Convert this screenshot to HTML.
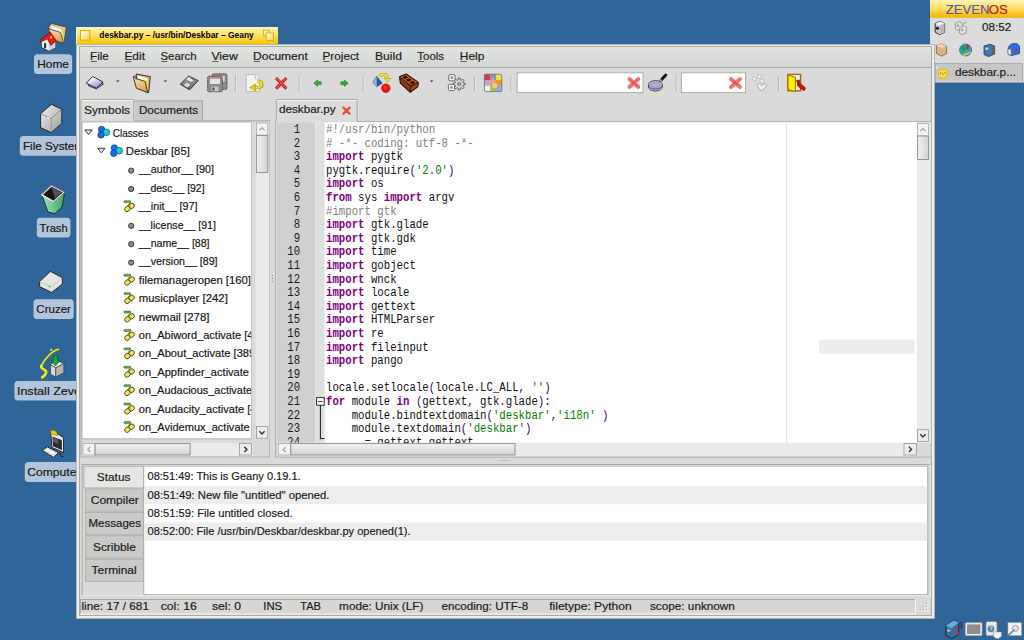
<!DOCTYPE html>
<html><head><meta charset="utf-8"><title>Geany</title>
<style>html,body{margin:0;padding:0;width:1024px;height:640px;overflow:hidden;background:#2f6598;}
svg{display:block;font-family:"Liberation Sans", sans-serif;}
text{white-space:pre;}</style></head>
<body><svg width="1024" height="640" viewBox="0 0 1024 640" font-family="'Liberation Sans', sans-serif"><defs><linearGradient id="gThumbV" x1="0" y1="0" x2="1" y2="0"><stop offset="0" stop-color="#f0f2f0"/><stop offset="1" stop-color="#d2d4d2"/></linearGradient><linearGradient id="gThumbH" x1="0" y1="0" x2="0" y2="1"><stop offset="0" stop-color="#f0f2f0"/><stop offset="1" stop-color="#d2d4d2"/></linearGradient><linearGradient id="gTitle" x1="0" y1="0" x2="0" y2="1">
<stop offset="0" stop-color="#fff4b0"/><stop offset="0.45" stop-color="#ffe26a"/><stop offset="1" stop-color="#f6c400"/></linearGradient><linearGradient id="gMenu" x1="0" y1="0" x2="0" y2="1">
<stop offset="0" stop-color="#e2e4e1"/><stop offset="1" stop-color="#d2d5d1"/></linearGradient><linearGradient id="gPaper" x1="0" y1="0" x2="0.6" y2="1"><stop offset="0" stop-color="#ffffff"/><stop offset="0.35" stop-color="#f2f2fa"/><stop offset="1" stop-color="#9090d8"/></linearGradient><linearGradient id="gFolder" x1="0" y1="0" x2="0.4" y2="1"><stop offset="0" stop-color="#fbe6bd"/><stop offset="1" stop-color="#e0a652"/></linearGradient><linearGradient id="gFloppy" x1="0" y1="0" x2="0" y2="1"><stop offset="0" stop-color="#a8a8a8"/><stop offset="1" stop-color="#606060"/></linearGradient><radialGradient id="gBall" cx="0.4" cy="0.35" r="0.7"><stop offset="0" stop-color="#ff8080"/><stop offset="0.5" stop-color="#ee1010"/><stop offset="1" stop-color="#a00000"/></radialGradient><linearGradient id="gLens" x1="0" y1="0" x2="0" y2="1"><stop offset="0" stop-color="#e8e8ff"/><stop offset="1" stop-color="#8888cc"/></linearGradient><linearGradient id="gSq" x1="0" y1="0" x2="1" y2="1"><stop offset="0" stop-color="#ffffff"/><stop offset="1" stop-color="#f8d040"/></linearGradient><linearGradient id="gCube" x1="0" y1="0" x2="1" y2="1"><stop offset="0" stop-color="#f4f4f4"/><stop offset="1" stop-color="#9a9a9a"/></linearGradient><linearGradient id="gTrash" x1="0" y1="0" x2="1" y2="0"><stop offset="0" stop-color="#9ee6b4"/><stop offset="1" stop-color="#3aa868"/></linearGradient><linearGradient id="gPanelHdr" x1="0" y1="0" x2="0" y2="1"><stop offset="0" stop-color="#fff4b8"/><stop offset="0.5" stop-color="#ffdc60"/><stop offset="1" stop-color="#f3b400"/></linearGradient></defs><rect x="0" y="0" width="1024" height="640" fill="#2f6598"/>
<rect x="34" y="54.2" width="38.099999999999994" height="19.89999999999999" fill="#b3c5da" rx="3.5" />
<text x="37.20" y="68.30" font-size="11.6" fill="#141414" textLength="31.76" lengthAdjust="spacingAndGlyphs" stroke="#141414" stroke-width="0.18" >Home</text>
<rect x="19.8" y="136" width="70.2" height="19.69999999999999" fill="#b3c5da" rx="3.5" />
<text x="22.90" y="149.80" font-size="11.6" fill="#141414" textLength="61.16" lengthAdjust="spacingAndGlyphs" stroke="#141414" stroke-width="0.18" >File System</text>
<rect x="36.8" y="217.7" width="33.60000000000001" height="19.900000000000006" fill="#b3c5da" rx="3.5" />
<text x="39.50" y="231.60" font-size="11.6" fill="#141414" textLength="28.16" lengthAdjust="spacingAndGlyphs" stroke="#141414" stroke-width="0.18" >Trash</text>
<rect x="33.5" y="299.3" width="40.2" height="19.69999999999999" fill="#b3c5da" rx="3.5" />
<text x="36.30" y="313.20" font-size="11.6" fill="#141414" textLength="34.66" lengthAdjust="spacingAndGlyphs" stroke="#141414" stroke-width="0.18" >Cruzer</text>
<rect x="14.4" y="381" width="75.6" height="19.600000000000023" fill="#b3c5da" rx="3.5" />
<text x="16.90" y="394.60" font-size="11.6" fill="#141414" textLength="71.16" lengthAdjust="spacingAndGlyphs" stroke="#141414" stroke-width="0.18" >Install Zeven</text>
<rect x="24.8" y="462" width="65.2" height="20" fill="#b3c5da" rx="3.5" />
<text x="27.30" y="476.00" font-size="11.6" fill="#141414" textLength="53.16" lengthAdjust="spacingAndGlyphs" stroke="#141414" stroke-width="0.18" >Computer</text>
<rect x="930" y="0" width="94" height="82.6" fill="#dcdcdc"/>
<rect x="930" y="0" width="94" height="17.6" fill="url(#gPanelHdr)"/>
<rect x="930" y="17.2" width="94" height="0.6" fill="#e8c020"/>
<text x="945.84" y="13.70" font-size="12.6" fill="#5656a8" textLength="43.66" lengthAdjust="spacingAndGlyphs" stroke="#5656a8" stroke-width="0.18" >ZEVEN</text>
<text x="988.84" y="13.70" font-size="12.6" fill="#cc1010" textLength="19.06" lengthAdjust="spacingAndGlyphs" stroke="#cc1010" stroke-width="0.18" >OS</text>
<text x="982.12" y="31.30" font-size="11.4" fill="#1a1a1a" textLength="29.24" lengthAdjust="spacingAndGlyphs" stroke="#1a1a1a" stroke-width="0.18" >08:52</text>
<path d="M935.2,23.4 L940.4,21.4 L944.6,23.6 L944.6,32.4 L939.6,34.6 L935.2,32.2 Z" fill="#dcdcdc" stroke="#1a1a1a" stroke-width="0.9" stroke-linejoin="round"/>
<path d="M935.2,23.4 L939.6,25.4 L944.6,23.6 L940.4,21.4 Z" fill="#f4f4f4"/>
<path d="M939.6,25.4 L944.6,23.6 L944.6,32.4 L939.6,34.6 Z" fill="#b8b8b8"/>
<circle cx="937.4" cy="28.2" r="1.8" fill="#2a2a2a"/><circle cx="937.6" cy="31.8" r="0.6" fill="#e02020"/>
<path d="M955.4,23.4 L959.6,21.6 L962.2,23.0 L962.0,28.6 L957.8,30.4 L955.4,29.0 Z" fill="#e4e4e4" stroke="#8a8a8a" stroke-width="0.8" stroke-linejoin="round"/>
<path d="M959.6,27.6 L963.8,25.8 L966.4,27.2 L966.2,32.8 L962.0,34.6 L959.6,33.2 Z" fill="#e4e4e4" stroke="#8a8a8a" stroke-width="0.8" stroke-linejoin="round"/>
<rect x="956.6" y="24.4" width="2.6" height="2.6" fill="#a8a8a8"/><rect x="960.8" y="28.6" width="2.6" height="2.6" fill="#a8a8a8"/>
<path d="M962.6,24.4 L966.8,22.0" stroke="#8a8a8a" stroke-width="0.8"/>
<path d="M936.4,45.6 L941.2,43.8 L946.6,46.2 L946.6,53.6 L941.6,56.2 L936.4,53.4 Z" fill="#e0b080" stroke="#6a5040" stroke-width="0.7"/>
<path d="M936.4,45.6 L941.6,48.0 L946.6,46.2 L941.2,43.8 Z" fill="#f8d4a8"/>
<circle cx="965.6" cy="50.0" r="6.0" fill="#28a8d0" stroke="#205080" stroke-width="0.7"/>
<path d="M961.0,48.0 L964.0,45.0 L966.0,49.0 L963.0,52.0 Z" fill="#20a030"/><path d="M966.0,45.0 L969.0,45.6 L968.4,50.0 L966.6,49.4 Z" fill="#e02020"/>
<path d="M960.4,55.4 C964,54 968,52 971.6,51.4 C970,54.4 965,56.6 960.4,55.4 Z" fill="#f0c020"/>
<path d="M984.0,46.0 L990.0,44.2 L994.6,46.0 L994.6,54.0 L988.6,56.6 L984.0,54.6 Z" fill="#3a78b0" stroke="#1a2a40" stroke-width="0.7"/>
<rect x="985.2" y="47.6" width="3.2" height="2.2" fill="#c0d0e0"/><circle cx="992.6" cy="49.0" r="1.0" fill="#e02020"/><circle cx="993.0" cy="52.4" r="1.0" fill="#e02020"/>
<path d="M1008.2,49.0 C1008.2,45 1012,43.4 1014.6,43.4 C1017.6,43.4 1019.6,45 1019.6,48 L1019.6,53.4 L1011.6,55.6 L1008.2,54.4 Z" fill="#2a70d8" stroke="#1a3060" stroke-width="0.7"/>
<path d="M1007.8,49.6 L1010.8,48.8 L1011.4,54.4 L1008.4,54.8 Z" fill="#f0f0f0" stroke="#606060" stroke-width="0.5"/><circle cx="1016.4" cy="49.6" r="0.9" fill="#e02020"/>
<rect x="935.2" y="63.4" width="87.4" height="18.6" fill="#c6c6c6" stroke="#a4a4a4" stroke-width="0.8"/>
<rect x="935.8" y="80.6" width="86.2" height="1" fill="#d8d8d8"/>
<text x="954.90" y="75.50" font-size="11.6" fill="#1a1a1a" textLength="61.16" lengthAdjust="spacingAndGlyphs" stroke="#1a1a1a" stroke-width="0.18" >deskbar.p...</text>
<path d="M938.2,72.4 C938.2,68.4 947.4,68.4 947.4,72.4 C947.4,76.4 945.4,78.2 942.8,78.2 C940.2,78.2 938.2,76.4 938.2,72.4 Z" fill="#f4e040" stroke="#c8a800" stroke-width="0.6"/>
<path d="M947.0,70.2 C950.4,70.2 950.4,75.6 946.4,76.0" fill="none" stroke="#e8c820" stroke-width="1.0"/><rect x="939.4" y="78.0" width="7" height="1.2" fill="#e0c820"/>
<circle cx="940.6" cy="73.0" r="0.7" fill="#e04020"/><circle cx="942.8" cy="74.0" r="0.7" fill="#e04020"/><circle cx="945.0" cy="73.0" r="0.7" fill="#e04020"/>
<rect x="936.6" y="66.0" width="0.8" height="2.6" fill="#f4f4f4"/>
<rect x="76" y="27" width="202" height="17" fill="url(#gTitle)" />
<rect x="76" y="27" width="202" height="1" fill="#f4f0d8" />
<rect x="76" y="27" width="1" height="17" fill="#f4f0d8" />
<rect x="76" y="44" width="859" height="575" fill="#eeeeec" />
<rect x="76.4" y="44.4" width="858.2" height="574.2" fill="none" stroke="#a4a4a0" stroke-width="0.8" />
<rect x="79" y="46" width="853" height="570" fill="#dadada" />
<rect x="79" y="46" width="853" height="1" fill="#a9a9a5" />
<rect x="79" y="46" width="1" height="570" fill="#a9a9a5" />
<rect x="931" y="46" width="1" height="570" fill="#a9a9a5" />
<rect x="79" y="615" width="853" height="1" fill="#a9a9a5" />
<rect x="80" y="47" width="851" height="20.5" fill="url(#gMenu)" />
<rect x="80" y="67" width="851" height="1" fill="#a8aaa6" />
<text x="90.01" y="59.80" font-size="11.5" fill="#1a1a1a" textLength="18.85" lengthAdjust="spacingAndGlyphs" stroke="#1a1a1a" stroke-width="0.18" >File</text>
<rect x="90.7" y="61.0" width="6.2" height="0.7" fill="#2a2a2a" />
<text x="124.41" y="59.80" font-size="11.5" fill="#1a1a1a" textLength="20.55" lengthAdjust="spacingAndGlyphs" stroke="#1a1a1a" stroke-width="0.18" >Edit</text>
<rect x="125.1" y="61.0" width="6.2" height="0.7" fill="#2a2a2a" />
<text x="160.51" y="59.80" font-size="11.5" fill="#1a1a1a" textLength="35.95" lengthAdjust="spacingAndGlyphs" stroke="#1a1a1a" stroke-width="0.18" >Search</text>
<rect x="161.2" y="61.0" width="6.2" height="0.7" fill="#2a2a2a" />
<text x="211.41" y="59.80" font-size="11.5" fill="#1a1a1a" textLength="26.35" lengthAdjust="spacingAndGlyphs" stroke="#1a1a1a" stroke-width="0.18" >View</text>
<rect x="212.1" y="61.0" width="6.2" height="0.7" fill="#2a2a2a" />
<text x="253.01" y="59.80" font-size="11.5" fill="#1a1a1a" textLength="54.85" lengthAdjust="spacingAndGlyphs" stroke="#1a1a1a" stroke-width="0.18" >Document</text>
<rect x="253.7" y="61.0" width="6.2" height="0.7" fill="#2a2a2a" />
<text x="322.51" y="59.80" font-size="11.5" fill="#1a1a1a" textLength="36.55" lengthAdjust="spacingAndGlyphs" stroke="#1a1a1a" stroke-width="0.18" >Project</text>
<rect x="323.2" y="61.0" width="6.2" height="0.7" fill="#2a2a2a" />
<text x="375.01" y="59.80" font-size="11.5" fill="#1a1a1a" textLength="26.85" lengthAdjust="spacingAndGlyphs" stroke="#1a1a1a" stroke-width="0.18" >Build</text>
<rect x="375.7" y="61.0" width="6.2" height="0.7" fill="#2a2a2a" />
<text x="417.31" y="59.80" font-size="11.5" fill="#1a1a1a" textLength="26.75" lengthAdjust="spacingAndGlyphs" stroke="#1a1a1a" stroke-width="0.18" >Tools</text>
<rect x="418.0" y="61.0" width="6.2" height="0.7" fill="#2a2a2a" />
<text x="459.81" y="59.80" font-size="11.5" fill="#1a1a1a" textLength="24.55" lengthAdjust="spacingAndGlyphs" stroke="#1a1a1a" stroke-width="0.18" >Help</text>
<rect x="460.5" y="61.0" width="6.2" height="0.7" fill="#2a2a2a" />
<rect x="80" y="68.8" width="851" height="29" fill="#dadada" />
<rect x="80" y="599" width="836" height="15" fill="#d6d6d4" />
<rect x="80" y="599" width="836" height="1" fill="#a8a8a4" />
<rect x="80" y="599" width="1" height="15" fill="#a8a8a4" />
<rect x="80" y="613.5" width="836" height="1" fill="#f4f4f2" />
<rect x="915" y="599" width="1" height="15" fill="#f4f4f2" />
<text x="81.51" y="610.30" font-size="11.5" fill="#1a1a1a" textLength="67.45" lengthAdjust="spacingAndGlyphs" stroke="#1a1a1a" stroke-width="0.18" >line: 17 / 681</text>
<text x="160.71" y="610.30" font-size="11.5" fill="#1a1a1a" textLength="36.05" lengthAdjust="spacingAndGlyphs" stroke="#1a1a1a" stroke-width="0.18" >col: 16</text>
<text x="212.01" y="610.30" font-size="11.5" fill="#1a1a1a" textLength="29.15" lengthAdjust="spacingAndGlyphs" stroke="#1a1a1a" stroke-width="0.18" >sel: 0</text>
<text x="263.31" y="610.30" font-size="11.5" fill="#1a1a1a" textLength="18.85" lengthAdjust="spacingAndGlyphs" stroke="#1a1a1a" stroke-width="0.18" >INS</text>
<text x="300.21" y="610.30" font-size="11.5" fill="#1a1a1a" textLength="20.65" lengthAdjust="spacingAndGlyphs" stroke="#1a1a1a" stroke-width="0.18" >TAB</text>
<text x="339.11" y="610.30" font-size="11.5" fill="#1a1a1a" textLength="84.25" lengthAdjust="spacingAndGlyphs" stroke="#1a1a1a" stroke-width="0.18" >mode: Unix (LF)</text>
<text x="441.51" y="610.30" font-size="11.5" fill="#1a1a1a" textLength="86.65" lengthAdjust="spacingAndGlyphs" stroke="#1a1a1a" stroke-width="0.18" >encoding: UTF-8</text>
<text x="549.21" y="610.30" font-size="11.5" fill="#1a1a1a" textLength="82.45" lengthAdjust="spacingAndGlyphs" stroke="#1a1a1a" stroke-width="0.18" >filetype: Python</text>
<text x="650.01" y="610.30" font-size="11.5" fill="#1a1a1a" textLength="84.85" lengthAdjust="spacingAndGlyphs" stroke="#1a1a1a" stroke-width="0.18" >scope: unknown</text>
<rect x="134" y="100.4" width="68.6" height="19.6" fill="#c9c9c7" />
<rect x="134" y="100.4" width="68.6" height="1" fill="#a8a8a4" />
<rect x="202" y="100.4" width="1" height="19.6" fill="#a8a8a4" />
<rect x="134" y="101.4" width="1" height="18.6" fill="#e0e0de" />
<text x="138.91" y="114.30" font-size="11.5" fill="#1a1a1a" textLength="59.15" lengthAdjust="spacingAndGlyphs" stroke="#1a1a1a" stroke-width="0.18" >Documents</text>
<rect x="80.4" y="99" width="53.4" height="22" fill="#dcdcda" />
<rect x="81" y="99" width="52.2" height="1" fill="#a8a8a4" />
<rect x="80.4" y="99.8" width="1" height="21" fill="#a8a8a4" />
<rect x="133.2" y="99.8" width="1" height="21" fill="#a8a8a4" />
<rect x="81.4" y="100" width="51.8" height="1" fill="#f2f2f0" />
<text x="84.11" y="113.80" font-size="11.5" fill="#1a1a1a" textLength="45.95" lengthAdjust="spacingAndGlyphs" stroke="#1a1a1a" stroke-width="0.18" >Symbols</text>
<rect x="80.5" y="120.3" width="189.5" height="337" fill="#dadada" />
<rect x="134" y="120.3" width="136" height="1" fill="#a8a8a4" />
<rect x="80.5" y="120.3" width="1" height="337" fill="#a8a8a4" />
<rect x="269.2" y="120.3" width="0.8" height="337" fill="#b0b0ac" />
<rect x="80.5" y="456.5" width="189.5" height="1" fill="#b0b0ac" />
<rect x="81.6" y="121.6" width="170" height="317.6" fill="#a6a6a2" />
<rect x="82.4" y="122.4" width="168.8" height="316" fill="#ffffff" />
<rect x="255.6" y="122.4" width="13.6" height="316.4" fill="#e9ebea" />
<rect x="256.4" y="123.0" width="11.4" height="12.2" fill="#f2f4f2" stroke="#9c9c9c" stroke-width="0.7" />
<rect x="256.4" y="135.4" width="11.4" height="37.0" fill="url(#gThumbV)" stroke="#8a8a8a" stroke-width="0.9" />
<rect x="256.4" y="426.6" width="11.4" height="11.6" fill="#eceeec" stroke="#8a8a8a" stroke-width="0.7" />
<rect x="82.4" y="443.0" width="170.2" height="13.0" fill="#e9ebea" />
<rect x="83.0" y="443.6" width="12.0" height="11.4" fill="#f2f4f2" stroke="#9c9c9c" stroke-width="0.7" />
<rect x="95.1" y="443.6" width="95.0" height="11.4" fill="url(#gThumbH)" stroke="#8a8a8a" stroke-width="0.9" />
<rect x="239.6" y="443.6" width="12.0" height="11.4" fill="#eceeec" stroke="#8a8a8a" stroke-width="0.7" />
<rect x="275.8" y="99" width="81.5" height="22.4" fill="#dcdcda" />
<rect x="276.4" y="99" width="80.4" height="1" fill="#a8a8a4" />
<rect x="275.8" y="99.8" width="1" height="21.6" fill="#a8a8a4" />
<rect x="356.6" y="99.8" width="1" height="21.6" fill="#a8a8a4" />
<rect x="276.6" y="100" width="80" height="1" fill="#f2f2f0" />
<text x="278.91" y="113.30" font-size="11.5" fill="#1a1a1a" textLength="56.85" lengthAdjust="spacingAndGlyphs" stroke="#1a1a1a" stroke-width="0.18" >deskbar.py</text>
<rect x="275.2" y="121.2" width="656.4" height="336" fill="#dadada" />
<rect x="357" y="121.2" width="574.6" height="1" fill="#a8a8a4" />
<rect x="275.2" y="121.2" width="1" height="336" fill="#a8a8a4" />
<rect x="930.8" y="121.2" width="0.8" height="336" fill="#b0b0ac" />
<rect x="275.2" y="456.6" width="656.4" height="1" fill="#b0b0ac" />
<rect x="276.4" y="122.2" width="640.8" height="320.6" fill="#ffffff" />
<rect x="276.4" y="122.2" width="38.8" height="320.6" fill="#d0d0d0" />
<rect x="315.2" y="122.2" width="9.4" height="320.6" fill="#dfdfdf" />
<rect x="786.2" y="122.2" width="0.9" height="320.6" fill="#c8ecc8" />
<rect x="819.3" y="339.6" width="95.4" height="14" fill="#ececec" />
<rect x="916.8" y="122.2" width="14.0" height="320.6" fill="#e9ebea" />
<rect x="917.6" y="123.4" width="11.0" height="12.6" fill="#f2f4f2" stroke="#9c9c9c" stroke-width="0.7" />
<rect x="917.6" y="136.0" width="11.0" height="23.5" fill="url(#gThumbV)" stroke="#8a8a8a" stroke-width="0.9" />
<rect x="917.6" y="429.7" width="11.0" height="11.6" fill="#eceeec" stroke="#8a8a8a" stroke-width="0.7" />
<rect x="277.0" y="442.8" width="640.0" height="13.4" fill="#e9ebea" />
<rect x="278.2" y="443.6" width="12.2" height="11.4" fill="#f2f4f2" stroke="#9c9c9c" stroke-width="0.7" />
<rect x="290.8" y="443.6" width="224.2" height="11.4" fill="url(#gThumbH)" stroke="#8a8a8a" stroke-width="0.9" />
<rect x="904.0" y="443.6" width="12.4" height="11.4" fill="#eceeec" stroke="#8a8a8a" stroke-width="0.7" />
<rect x="81.7" y="464" width="849.3" height="132" fill="#dadada" />
<rect x="81.7" y="464" width="849.3" height="1" fill="#a8a8a4" />
<rect x="81.7" y="464" width="1" height="132" fill="#a8a8a4" />
<rect x="81.7" y="595.4" width="849.3" height="0.8" fill="#f0f0ee" />
<rect x="930.2" y="464" width="0.8" height="132" fill="#f0f0ee" />
<rect x="143.4" y="466" width="785" height="129" fill="#a8a8a4" />
<rect x="144.2" y="466.6" width="783.0" height="127.6" fill="#ffffff" />
<rect x="144.2" y="486.2" width="783.0" height="17.9" fill="#ededed" />
<rect x="144.2" y="522.5" width="783.0" height="18.2" fill="#ededed" />
<rect x="85.5" y="489" width="57.8" height="22.19999999999999" fill="#c9c9c7" stroke="#a8a8a4" stroke-width="0.8" />
<rect x="85.5" y="512.4" width="57.8" height="22.399999999999977" fill="#c9c9c7" stroke="#a8a8a4" stroke-width="0.8" />
<rect x="85.5" y="535.8" width="57.8" height="22.40000000000009" fill="#c9c9c7" stroke="#a8a8a4" stroke-width="0.8" />
<rect x="85.5" y="559.2" width="57.8" height="22.09999999999991" fill="#c9c9c7" stroke="#a8a8a4" stroke-width="0.8" />
<rect x="84" y="466.3" width="59.6" height="21.6" fill="#e6e6e4" stroke="#a8a8a4" stroke-width="0.8" />
<text x="96.81" y="480.50" font-size="11.5" fill="#1a1a1a" textLength="33.65" lengthAdjust="spacingAndGlyphs" stroke="#1a1a1a" stroke-width="0.18" >Status</text>
<text x="90.71" y="503.60" font-size="11.5" fill="#1a1a1a" textLength="48.15" lengthAdjust="spacingAndGlyphs" stroke="#1a1a1a" stroke-width="0.18" >Compiler</text>
<text x="88.51" y="527.00" font-size="11.5" fill="#1a1a1a" textLength="52.55" lengthAdjust="spacingAndGlyphs" stroke="#1a1a1a" stroke-width="0.18" >Messages</text>
<text x="93.01" y="550.60" font-size="11.5" fill="#1a1a1a" textLength="42.85" lengthAdjust="spacingAndGlyphs" stroke="#1a1a1a" stroke-width="0.18" >Scribble</text>
<text x="91.61" y="573.80" font-size="11.5" fill="#1a1a1a" textLength="44.95" lengthAdjust="spacingAndGlyphs" stroke="#1a1a1a" stroke-width="0.18" >Terminal</text>
<text x="147.53" y="480.40" font-size="11.2" fill="#1a1a1a" textLength="153.11" lengthAdjust="spacingAndGlyphs" stroke="#1a1a1a" stroke-width="0.18" >08:51:49: This is Geany 0.19.1.</text>
<text x="147.53" y="498.70" font-size="11.2" fill="#1a1a1a" textLength="181.98" lengthAdjust="spacingAndGlyphs" stroke="#1a1a1a" stroke-width="0.18" >08:51:49: New file &quot;untitled&quot; opened.</text>
<text x="147.53" y="517.00" font-size="11.2" fill="#1a1a1a" textLength="145.08" lengthAdjust="spacingAndGlyphs" stroke="#1a1a1a" stroke-width="0.18" >08:51:59: File untitled closed.</text>
<text x="147.53" y="535.30" font-size="11.2" fill="#1a1a1a" textLength="263.03" lengthAdjust="spacingAndGlyphs" stroke="#1a1a1a" stroke-width="0.18" >08:52:00: File /usr/bin/Deskbar/deskbar.py opened(1).</text>
<defs><clipPath id="cTree"><rect x="82.4" y="122.4" width="168.8" height="316"/></clipPath></defs>
<g clip-path="url(#cTree)">
<text x="112.85" y="136.50" font-size="10.9" fill="#161616" textLength="35.59" lengthAdjust="spacingAndGlyphs" stroke="#161616" stroke-width="0.18" >Classes</text>
<text x="125.85" y="154.90" font-size="10.9" fill="#161616" textLength="63.96" lengthAdjust="spacingAndGlyphs" stroke="#161616" stroke-width="0.18" >Deskbar [85]</text>
<text x="138.85" y="173.30" font-size="10.9" fill="#161616" textLength="75.16" lengthAdjust="spacingAndGlyphs" stroke="#161616" stroke-width="0.18" >__author__ [90]</text>
<text x="138.85" y="191.70" font-size="10.9" fill="#161616" textLength="65.75" lengthAdjust="spacingAndGlyphs" stroke="#161616" stroke-width="0.18" >__desc__ [92]</text>
<text x="138.85" y="210.10" font-size="10.9" fill="#161616" textLength="58.62" lengthAdjust="spacingAndGlyphs" stroke="#161616" stroke-width="0.18" >__init__ [97]</text>
<text x="138.85" y="228.50" font-size="10.9" fill="#161616" textLength="77.05" lengthAdjust="spacingAndGlyphs" stroke="#161616" stroke-width="0.18" >__license__ [91]</text>
<text x="138.85" y="246.90" font-size="10.9" fill="#161616" textLength="70.73" lengthAdjust="spacingAndGlyphs" stroke="#161616" stroke-width="0.18" >__name__ [88]</text>
<text x="138.85" y="265.30" font-size="10.9" fill="#161616" textLength="78.70" lengthAdjust="spacingAndGlyphs" stroke="#161616" stroke-width="0.18" >__version__ [89]</text>
<text x="138.85" y="283.70" font-size="10.9" fill="#161616" textLength="112.05" lengthAdjust="spacingAndGlyphs" stroke="#161616" stroke-width="0.18" >filemanageropen [160]</text>
<text x="138.85" y="302.10" font-size="10.9" fill="#161616" textLength="88.97" lengthAdjust="spacingAndGlyphs" stroke="#161616" stroke-width="0.18" >musicplayer [242]</text>
<text x="138.85" y="320.50" font-size="10.9" fill="#161616" textLength="70.72" lengthAdjust="spacingAndGlyphs" stroke="#161616" stroke-width="0.18" >newmail [278]</text>
<text x="138.85" y="338.90" font-size="10.9" fill="#161616" textLength="129.94" lengthAdjust="spacingAndGlyphs" stroke="#161616" stroke-width="0.18" >on_Abiword_activate [431]</text>
<text x="138.85" y="357.30" font-size="10.9" fill="#161616" textLength="119.33" lengthAdjust="spacingAndGlyphs" stroke="#161616" stroke-width="0.18" >on_About_activate [389]</text>
<text x="138.85" y="375.70" font-size="10.9" fill="#161616" textLength="137.88" lengthAdjust="spacingAndGlyphs" stroke="#161616" stroke-width="0.18" >on_Appfinder_activate [402]</text>
<text x="138.85" y="394.10" font-size="10.9" fill="#161616" textLength="140.60" lengthAdjust="spacingAndGlyphs" stroke="#161616" stroke-width="0.18" >on_Audacious_activate [410]</text>
<text x="138.85" y="412.50" font-size="10.9" fill="#161616" textLength="133.04" lengthAdjust="spacingAndGlyphs" stroke="#161616" stroke-width="0.18" >on_Audacity_activate [418]</text>
<text x="138.85" y="430.90" font-size="10.9" fill="#161616" textLength="138.53" lengthAdjust="spacingAndGlyphs" stroke="#161616" stroke-width="0.18" >on_Avidemux_activate [426]</text>
<!--TREEICONS-->
</g>
<defs><clipPath id="cCode"><rect x="276.4" y="122.2" width="640.8" height="320.6"/></clipPath></defs>
<g clip-path="url(#cCode)">
<text x="300.2" y="133.00" font-size="12" font-family="'Liberation Mono', monospace" fill="#1a1a1a" text-anchor="end" textLength="6.42" lengthAdjust="spacingAndGlyphs">1</text>
<text x="326.00" y="133.00" font-size="12" font-family="'Liberation Mono', monospace" font-weight="normal" fill="#808080" textLength="109.14" lengthAdjust="spacingAndGlyphs">#!/usr/bin/python</text>
<text x="300.2" y="146.60" font-size="12" font-family="'Liberation Mono', monospace" fill="#1a1a1a" text-anchor="end" textLength="6.42" lengthAdjust="spacingAndGlyphs">2</text>
<text x="326.00" y="146.60" font-size="12" font-family="'Liberation Mono', monospace" font-weight="normal" fill="#808080" textLength="147.66" lengthAdjust="spacingAndGlyphs"># -*- coding: utf-8 -*-</text>
<text x="300.2" y="160.20" font-size="12" font-family="'Liberation Mono', monospace" fill="#1a1a1a" text-anchor="end" textLength="6.42" lengthAdjust="spacingAndGlyphs">3</text>
<text x="326.00" y="160.20" font-size="12" font-family="'Liberation Mono', monospace" font-weight="bold" fill="#7f007f" textLength="38.52" lengthAdjust="spacingAndGlyphs">import</text>
<text x="364.52" y="160.20" font-size="12" font-family="'Liberation Mono', monospace" font-weight="normal" fill="#101010" textLength="38.52" lengthAdjust="spacingAndGlyphs"> pygtk</text>
<text x="300.2" y="173.80" font-size="12" font-family="'Liberation Mono', monospace" fill="#1a1a1a" text-anchor="end" textLength="6.42" lengthAdjust="spacingAndGlyphs">4</text>
<text x="326.00" y="173.80" font-size="12" font-family="'Liberation Mono', monospace" font-weight="normal" fill="#101010" textLength="32.10" lengthAdjust="spacingAndGlyphs">pygtk</text>
<text x="358.10" y="173.80" font-size="12" font-family="'Liberation Mono', monospace" font-weight="normal" fill="#300080" textLength="6.42" lengthAdjust="spacingAndGlyphs">.</text>
<text x="364.52" y="173.80" font-size="12" font-family="'Liberation Mono', monospace" font-weight="normal" fill="#101010" textLength="44.94" lengthAdjust="spacingAndGlyphs">require</text>
<text x="409.46" y="173.80" font-size="12" font-family="'Liberation Mono', monospace" font-weight="normal" fill="#300080" textLength="6.42" lengthAdjust="spacingAndGlyphs">(</text>
<text x="415.88" y="173.80" font-size="12" font-family="'Liberation Mono', monospace" font-weight="normal" fill="#008000" textLength="32.10" lengthAdjust="spacingAndGlyphs">&#x27;2.0&#x27;</text>
<text x="447.98" y="173.80" font-size="12" font-family="'Liberation Mono', monospace" font-weight="normal" fill="#300080" textLength="6.42" lengthAdjust="spacingAndGlyphs">)</text>
<text x="300.2" y="187.40" font-size="12" font-family="'Liberation Mono', monospace" fill="#1a1a1a" text-anchor="end" textLength="6.42" lengthAdjust="spacingAndGlyphs">5</text>
<text x="326.00" y="187.40" font-size="12" font-family="'Liberation Mono', monospace" font-weight="bold" fill="#7f007f" textLength="38.52" lengthAdjust="spacingAndGlyphs">import</text>
<text x="364.52" y="187.40" font-size="12" font-family="'Liberation Mono', monospace" font-weight="normal" fill="#101010" textLength="19.26" lengthAdjust="spacingAndGlyphs"> os</text>
<text x="300.2" y="201.00" font-size="12" font-family="'Liberation Mono', monospace" fill="#1a1a1a" text-anchor="end" textLength="6.42" lengthAdjust="spacingAndGlyphs">6</text>
<text x="326.00" y="201.00" font-size="12" font-family="'Liberation Mono', monospace" font-weight="bold" fill="#7f007f" textLength="25.68" lengthAdjust="spacingAndGlyphs">from</text>
<text x="351.68" y="201.00" font-size="12" font-family="'Liberation Mono', monospace" font-weight="normal" fill="#101010" textLength="32.10" lengthAdjust="spacingAndGlyphs"> sys </text>
<text x="383.78" y="201.00" font-size="12" font-family="'Liberation Mono', monospace" font-weight="bold" fill="#7f007f" textLength="38.52" lengthAdjust="spacingAndGlyphs">import</text>
<text x="422.30" y="201.00" font-size="12" font-family="'Liberation Mono', monospace" font-weight="normal" fill="#101010" textLength="32.10" lengthAdjust="spacingAndGlyphs"> argv</text>
<text x="300.2" y="214.60" font-size="12" font-family="'Liberation Mono', monospace" fill="#1a1a1a" text-anchor="end" textLength="6.42" lengthAdjust="spacingAndGlyphs">7</text>
<text x="326.00" y="214.60" font-size="12" font-family="'Liberation Mono', monospace" font-weight="normal" fill="#808080" textLength="70.62" lengthAdjust="spacingAndGlyphs">#import gtk</text>
<text x="300.2" y="228.20" font-size="12" font-family="'Liberation Mono', monospace" fill="#1a1a1a" text-anchor="end" textLength="6.42" lengthAdjust="spacingAndGlyphs">8</text>
<text x="326.00" y="228.20" font-size="12" font-family="'Liberation Mono', monospace" font-weight="bold" fill="#7f007f" textLength="38.52" lengthAdjust="spacingAndGlyphs">import</text>
<text x="364.52" y="228.20" font-size="12" font-family="'Liberation Mono', monospace" font-weight="normal" fill="#101010" textLength="25.68" lengthAdjust="spacingAndGlyphs"> gtk</text>
<text x="390.20" y="228.20" font-size="12" font-family="'Liberation Mono', monospace" font-weight="normal" fill="#300080" textLength="6.42" lengthAdjust="spacingAndGlyphs">.</text>
<text x="396.62" y="228.20" font-size="12" font-family="'Liberation Mono', monospace" font-weight="normal" fill="#101010" textLength="32.10" lengthAdjust="spacingAndGlyphs">glade</text>
<text x="300.2" y="241.80" font-size="12" font-family="'Liberation Mono', monospace" fill="#1a1a1a" text-anchor="end" textLength="6.42" lengthAdjust="spacingAndGlyphs">9</text>
<text x="326.00" y="241.80" font-size="12" font-family="'Liberation Mono', monospace" font-weight="bold" fill="#7f007f" textLength="38.52" lengthAdjust="spacingAndGlyphs">import</text>
<text x="364.52" y="241.80" font-size="12" font-family="'Liberation Mono', monospace" font-weight="normal" fill="#101010" textLength="25.68" lengthAdjust="spacingAndGlyphs"> gtk</text>
<text x="390.20" y="241.80" font-size="12" font-family="'Liberation Mono', monospace" font-weight="normal" fill="#300080" textLength="6.42" lengthAdjust="spacingAndGlyphs">.</text>
<text x="396.62" y="241.80" font-size="12" font-family="'Liberation Mono', monospace" font-weight="normal" fill="#101010" textLength="19.26" lengthAdjust="spacingAndGlyphs">gdk</text>
<text x="300.2" y="255.40" font-size="12" font-family="'Liberation Mono', monospace" fill="#1a1a1a" text-anchor="end" textLength="12.84" lengthAdjust="spacingAndGlyphs">10</text>
<text x="326.00" y="255.40" font-size="12" font-family="'Liberation Mono', monospace" font-weight="bold" fill="#7f007f" textLength="38.52" lengthAdjust="spacingAndGlyphs">import</text>
<text x="364.52" y="255.40" font-size="12" font-family="'Liberation Mono', monospace" font-weight="normal" fill="#101010" textLength="32.10" lengthAdjust="spacingAndGlyphs"> time</text>
<text x="300.2" y="269.00" font-size="12" font-family="'Liberation Mono', monospace" fill="#1a1a1a" text-anchor="end" textLength="12.84" lengthAdjust="spacingAndGlyphs">11</text>
<text x="326.00" y="269.00" font-size="12" font-family="'Liberation Mono', monospace" font-weight="bold" fill="#7f007f" textLength="38.52" lengthAdjust="spacingAndGlyphs">import</text>
<text x="364.52" y="269.00" font-size="12" font-family="'Liberation Mono', monospace" font-weight="normal" fill="#101010" textLength="51.36" lengthAdjust="spacingAndGlyphs"> gobject</text>
<text x="300.2" y="282.60" font-size="12" font-family="'Liberation Mono', monospace" fill="#1a1a1a" text-anchor="end" textLength="12.84" lengthAdjust="spacingAndGlyphs">12</text>
<text x="326.00" y="282.60" font-size="12" font-family="'Liberation Mono', monospace" font-weight="bold" fill="#7f007f" textLength="38.52" lengthAdjust="spacingAndGlyphs">import</text>
<text x="364.52" y="282.60" font-size="12" font-family="'Liberation Mono', monospace" font-weight="normal" fill="#101010" textLength="32.10" lengthAdjust="spacingAndGlyphs"> wnck</text>
<text x="300.2" y="296.20" font-size="12" font-family="'Liberation Mono', monospace" fill="#1a1a1a" text-anchor="end" textLength="12.84" lengthAdjust="spacingAndGlyphs">13</text>
<text x="326.00" y="296.20" font-size="12" font-family="'Liberation Mono', monospace" font-weight="bold" fill="#7f007f" textLength="38.52" lengthAdjust="spacingAndGlyphs">import</text>
<text x="364.52" y="296.20" font-size="12" font-family="'Liberation Mono', monospace" font-weight="normal" fill="#101010" textLength="44.94" lengthAdjust="spacingAndGlyphs"> locale</text>
<text x="300.2" y="309.80" font-size="12" font-family="'Liberation Mono', monospace" fill="#1a1a1a" text-anchor="end" textLength="12.84" lengthAdjust="spacingAndGlyphs">14</text>
<text x="326.00" y="309.80" font-size="12" font-family="'Liberation Mono', monospace" font-weight="bold" fill="#7f007f" textLength="38.52" lengthAdjust="spacingAndGlyphs">import</text>
<text x="364.52" y="309.80" font-size="12" font-family="'Liberation Mono', monospace" font-weight="normal" fill="#101010" textLength="51.36" lengthAdjust="spacingAndGlyphs"> gettext</text>
<text x="300.2" y="323.40" font-size="12" font-family="'Liberation Mono', monospace" fill="#1a1a1a" text-anchor="end" textLength="12.84" lengthAdjust="spacingAndGlyphs">15</text>
<text x="326.00" y="323.40" font-size="12" font-family="'Liberation Mono', monospace" font-weight="bold" fill="#7f007f" textLength="38.52" lengthAdjust="spacingAndGlyphs">import</text>
<text x="364.52" y="323.40" font-size="12" font-family="'Liberation Mono', monospace" font-weight="normal" fill="#101010" textLength="70.62" lengthAdjust="spacingAndGlyphs"> HTMLParser</text>
<text x="300.2" y="337.00" font-size="12" font-family="'Liberation Mono', monospace" fill="#1a1a1a" text-anchor="end" textLength="12.84" lengthAdjust="spacingAndGlyphs">16</text>
<text x="326.00" y="337.00" font-size="12" font-family="'Liberation Mono', monospace" font-weight="bold" fill="#7f007f" textLength="38.52" lengthAdjust="spacingAndGlyphs">import</text>
<text x="364.52" y="337.00" font-size="12" font-family="'Liberation Mono', monospace" font-weight="normal" fill="#101010" textLength="19.26" lengthAdjust="spacingAndGlyphs"> re</text>
<text x="300.2" y="350.60" font-size="12" font-family="'Liberation Mono', monospace" fill="#1a1a1a" text-anchor="end" textLength="12.84" lengthAdjust="spacingAndGlyphs">17</text>
<text x="326.00" y="350.60" font-size="12" font-family="'Liberation Mono', monospace" font-weight="bold" fill="#7f007f" textLength="38.52" lengthAdjust="spacingAndGlyphs">import</text>
<text x="364.52" y="350.60" font-size="12" font-family="'Liberation Mono', monospace" font-weight="normal" fill="#101010" textLength="64.20" lengthAdjust="spacingAndGlyphs"> fileinput</text>
<text x="300.2" y="364.20" font-size="12" font-family="'Liberation Mono', monospace" fill="#1a1a1a" text-anchor="end" textLength="12.84" lengthAdjust="spacingAndGlyphs">18</text>
<text x="326.00" y="364.20" font-size="12" font-family="'Liberation Mono', monospace" font-weight="bold" fill="#7f007f" textLength="38.52" lengthAdjust="spacingAndGlyphs">import</text>
<text x="364.52" y="364.20" font-size="12" font-family="'Liberation Mono', monospace" font-weight="normal" fill="#101010" textLength="38.52" lengthAdjust="spacingAndGlyphs"> pango</text>
<text x="300.2" y="377.80" font-size="12" font-family="'Liberation Mono', monospace" fill="#1a1a1a" text-anchor="end" textLength="12.84" lengthAdjust="spacingAndGlyphs">19</text>
<text x="300.2" y="391.40" font-size="12" font-family="'Liberation Mono', monospace" fill="#1a1a1a" text-anchor="end" textLength="12.84" lengthAdjust="spacingAndGlyphs">20</text>
<text x="326.00" y="391.40" font-size="12" font-family="'Liberation Mono', monospace" font-weight="normal" fill="#101010" textLength="38.52" lengthAdjust="spacingAndGlyphs">locale</text>
<text x="364.52" y="391.40" font-size="12" font-family="'Liberation Mono', monospace" font-weight="normal" fill="#300080" textLength="6.42" lengthAdjust="spacingAndGlyphs">.</text>
<text x="370.94" y="391.40" font-size="12" font-family="'Liberation Mono', monospace" font-weight="normal" fill="#101010" textLength="57.78" lengthAdjust="spacingAndGlyphs">setlocale</text>
<text x="428.72" y="391.40" font-size="12" font-family="'Liberation Mono', monospace" font-weight="normal" fill="#300080" textLength="6.42" lengthAdjust="spacingAndGlyphs">(</text>
<text x="435.14" y="391.40" font-size="12" font-family="'Liberation Mono', monospace" font-weight="normal" fill="#101010" textLength="38.52" lengthAdjust="spacingAndGlyphs">locale</text>
<text x="473.66" y="391.40" font-size="12" font-family="'Liberation Mono', monospace" font-weight="normal" fill="#300080" textLength="6.42" lengthAdjust="spacingAndGlyphs">.</text>
<text x="480.08" y="391.40" font-size="12" font-family="'Liberation Mono', monospace" font-weight="normal" fill="#101010" textLength="38.52" lengthAdjust="spacingAndGlyphs">LC_ALL</text>
<text x="518.60" y="391.40" font-size="12" font-family="'Liberation Mono', monospace" font-weight="normal" fill="#300080" textLength="6.42" lengthAdjust="spacingAndGlyphs">,</text>
<text x="525.02" y="391.40" font-size="12" font-family="'Liberation Mono', monospace" font-weight="normal" fill="#101010" textLength="6.42" lengthAdjust="spacingAndGlyphs"> </text>
<text x="531.44" y="391.40" font-size="12" font-family="'Liberation Mono', monospace" font-weight="normal" fill="#008000" textLength="12.84" lengthAdjust="spacingAndGlyphs">&#x27;&#x27;</text>
<text x="544.28" y="391.40" font-size="12" font-family="'Liberation Mono', monospace" font-weight="normal" fill="#300080" textLength="6.42" lengthAdjust="spacingAndGlyphs">)</text>
<text x="300.2" y="405.00" font-size="12" font-family="'Liberation Mono', monospace" fill="#1a1a1a" text-anchor="end" textLength="12.84" lengthAdjust="spacingAndGlyphs">21</text>
<text x="326.00" y="405.00" font-size="12" font-family="'Liberation Mono', monospace" font-weight="bold" fill="#7f007f" textLength="19.26" lengthAdjust="spacingAndGlyphs">for</text>
<text x="345.26" y="405.00" font-size="12" font-family="'Liberation Mono', monospace" font-weight="normal" fill="#101010" textLength="51.36" lengthAdjust="spacingAndGlyphs"> module </text>
<text x="396.62" y="405.00" font-size="12" font-family="'Liberation Mono', monospace" font-weight="bold" fill="#7f007f" textLength="12.84" lengthAdjust="spacingAndGlyphs">in</text>
<text x="409.46" y="405.00" font-size="12" font-family="'Liberation Mono', monospace" font-weight="normal" fill="#101010" textLength="6.42" lengthAdjust="spacingAndGlyphs"> </text>
<text x="415.88" y="405.00" font-size="12" font-family="'Liberation Mono', monospace" font-weight="normal" fill="#300080" textLength="6.42" lengthAdjust="spacingAndGlyphs">(</text>
<text x="422.30" y="405.00" font-size="12" font-family="'Liberation Mono', monospace" font-weight="normal" fill="#101010" textLength="44.94" lengthAdjust="spacingAndGlyphs">gettext</text>
<text x="467.24" y="405.00" font-size="12" font-family="'Liberation Mono', monospace" font-weight="normal" fill="#300080" textLength="6.42" lengthAdjust="spacingAndGlyphs">,</text>
<text x="473.66" y="405.00" font-size="12" font-family="'Liberation Mono', monospace" font-weight="normal" fill="#101010" textLength="25.68" lengthAdjust="spacingAndGlyphs"> gtk</text>
<text x="499.34" y="405.00" font-size="12" font-family="'Liberation Mono', monospace" font-weight="normal" fill="#300080" textLength="6.42" lengthAdjust="spacingAndGlyphs">.</text>
<text x="505.76" y="405.00" font-size="12" font-family="'Liberation Mono', monospace" font-weight="normal" fill="#101010" textLength="32.10" lengthAdjust="spacingAndGlyphs">glade</text>
<text x="537.86" y="405.00" font-size="12" font-family="'Liberation Mono', monospace" font-weight="normal" fill="#300080" textLength="6.42" lengthAdjust="spacingAndGlyphs">)</text>
<text x="544.28" y="405.00" font-size="12" font-family="'Liberation Mono', monospace" font-weight="normal" fill="#300080" textLength="6.42" lengthAdjust="spacingAndGlyphs">:</text>
<text x="300.2" y="418.60" font-size="12" font-family="'Liberation Mono', monospace" fill="#1a1a1a" text-anchor="end" textLength="12.84" lengthAdjust="spacingAndGlyphs">22</text>
<text x="326.00" y="418.60" font-size="12" font-family="'Liberation Mono', monospace" font-weight="normal" fill="#101010" textLength="64.20" lengthAdjust="spacingAndGlyphs">    module</text>
<text x="390.20" y="418.60" font-size="12" font-family="'Liberation Mono', monospace" font-weight="normal" fill="#300080" textLength="6.42" lengthAdjust="spacingAndGlyphs">.</text>
<text x="396.62" y="418.60" font-size="12" font-family="'Liberation Mono', monospace" font-weight="normal" fill="#101010" textLength="89.88" lengthAdjust="spacingAndGlyphs">bindtextdomain</text>
<text x="486.50" y="418.60" font-size="12" font-family="'Liberation Mono', monospace" font-weight="normal" fill="#300080" textLength="6.42" lengthAdjust="spacingAndGlyphs">(</text>
<text x="492.92" y="418.60" font-size="12" font-family="'Liberation Mono', monospace" font-weight="normal" fill="#008000" textLength="57.78" lengthAdjust="spacingAndGlyphs">&#x27;deskbar&#x27;</text>
<text x="550.70" y="418.60" font-size="12" font-family="'Liberation Mono', monospace" font-weight="normal" fill="#300080" textLength="6.42" lengthAdjust="spacingAndGlyphs">,</text>
<text x="557.12" y="418.60" font-size="12" font-family="'Liberation Mono', monospace" font-weight="normal" fill="#008000" textLength="38.52" lengthAdjust="spacingAndGlyphs">&#x27;i18n&#x27;</text>
<text x="595.64" y="418.60" font-size="12" font-family="'Liberation Mono', monospace" font-weight="normal" fill="#101010" textLength="6.42" lengthAdjust="spacingAndGlyphs"> </text>
<text x="602.06" y="418.60" font-size="12" font-family="'Liberation Mono', monospace" font-weight="normal" fill="#300080" textLength="6.42" lengthAdjust="spacingAndGlyphs">)</text>
<text x="300.2" y="432.20" font-size="12" font-family="'Liberation Mono', monospace" fill="#1a1a1a" text-anchor="end" textLength="12.84" lengthAdjust="spacingAndGlyphs">23</text>
<text x="326.00" y="432.20" font-size="12" font-family="'Liberation Mono', monospace" font-weight="normal" fill="#101010" textLength="64.20" lengthAdjust="spacingAndGlyphs">    module</text>
<text x="390.20" y="432.20" font-size="12" font-family="'Liberation Mono', monospace" font-weight="normal" fill="#300080" textLength="6.42" lengthAdjust="spacingAndGlyphs">.</text>
<text x="396.62" y="432.20" font-size="12" font-family="'Liberation Mono', monospace" font-weight="normal" fill="#101010" textLength="64.20" lengthAdjust="spacingAndGlyphs">textdomain</text>
<text x="460.82" y="432.20" font-size="12" font-family="'Liberation Mono', monospace" font-weight="normal" fill="#300080" textLength="6.42" lengthAdjust="spacingAndGlyphs">(</text>
<text x="467.24" y="432.20" font-size="12" font-family="'Liberation Mono', monospace" font-weight="normal" fill="#008000" textLength="57.78" lengthAdjust="spacingAndGlyphs">&#x27;deskbar&#x27;</text>
<text x="525.02" y="432.20" font-size="12" font-family="'Liberation Mono', monospace" font-weight="normal" fill="#300080" textLength="6.42" lengthAdjust="spacingAndGlyphs">)</text>
<text x="300.2" y="445.80" font-size="12" font-family="'Liberation Mono', monospace" fill="#1a1a1a" text-anchor="end" textLength="12.84" lengthAdjust="spacingAndGlyphs">24</text>
<text x="326.00" y="445.80" font-size="12" font-family="'Liberation Mono', monospace" font-weight="normal" fill="#101010" textLength="38.52" lengthAdjust="spacingAndGlyphs">    _ </text>
<text x="364.52" y="445.80" font-size="12" font-family="'Liberation Mono', monospace" font-weight="normal" fill="#300080" textLength="6.42" lengthAdjust="spacingAndGlyphs">=</text>
<text x="370.94" y="445.80" font-size="12" font-family="'Liberation Mono', monospace" font-weight="normal" fill="#101010" textLength="51.36" lengthAdjust="spacingAndGlyphs"> gettext</text>
<text x="422.30" y="445.80" font-size="12" font-family="'Liberation Mono', monospace" font-weight="normal" fill="#300080" textLength="6.42" lengthAdjust="spacingAndGlyphs">.</text>
<text x="428.72" y="445.80" font-size="12" font-family="'Liberation Mono', monospace" font-weight="normal" fill="#101010" textLength="44.94" lengthAdjust="spacingAndGlyphs">gettext</text>
<rect x="316.6" y="397.6" width="7.6" height="7.6" fill="#ffffff" stroke="#1a1a1a" stroke-width="0.9"/>
<rect x="318.2" y="401" width="4.4" height="0.9" fill="#1a1a1a"/>
<rect x="319.9" y="405.2" width="1" height="34" fill="#1a1a1a"/>
<rect x="319.9" y="438" width="4.6" height="1" fill="#1a1a1a"/>
</g>
<text x="99.37" y="38.00" font-size="8.8" fill="#000000" font-weight="bold" textLength="154.38" lengthAdjust="spacingAndGlyphs" >deskbar.py – /usr/bin/Deskbar – Geany</text>
<rect x="80.5" y="30.5" width="9.4" height="9.6" fill="url(#gSq)" stroke="#d8a800" stroke-width="0.9"/>
<rect x="263.4" y="30.2" width="5.6" height="5.6" fill="url(#gSq)" stroke="#d8a800" stroke-width="0.8"/>
<rect x="266.2" y="33" width="7.4" height="7.4" fill="url(#gSq)" stroke="#d8a800" stroke-width="0.8"/>
<path d="M88,85.5 L96.2,89 L103.6,84 L95.6,80.4 Z" fill="#9a9ad8" stroke="#3a3a50" stroke-width="0.9" stroke-linejoin="round"/>
<path d="M86.2,83.2 L92.6,76.4 L103.0,82.0 L96.4,88.2 Z" fill="url(#gPaper)" stroke="#30303c" stroke-width="1" stroke-linejoin="round"/>
<path d="M116.0,80.4 L119.6,80.4 L117.8,82.2 Z" fill="#383838"/>
<path d="M136.1,74.0 L150.4,76.6 L148.6,92.6 L137.4,88.0 Z" fill="#e2aa5a" stroke="#2a2a20" stroke-width="0.9" stroke-linejoin="round"/>
<path d="M137.4,75.4 L147.6,78.2 L147.4,90.0 L138.6,86.6 Z" fill="#ffffff"/>
<path d="M145.4,80.0 L147.8,80.4 L147.6,90.8 L145.6,90.2 Z" fill="#e0ec3a"/>
<path d="M133.2,76.6 L134.8,76.0 L135.4,78.4 L145.2,81.4 L147.6,92.6 L136.4,88.2 Z" fill="url(#gFolder)" stroke="#2a2a20" stroke-width="0.9" stroke-linejoin="round"/>
<path d="M163.6,80.4 L167.20000000000002,80.4 L165.4,82.2 Z" fill="#383838"/>
<path d="M180.2,84.2 L188.6,76.0 L198.2,80.6 L189.6,89.8 Z" fill="url(#gFloppy)" stroke="#2a2a2a" stroke-width="0.9" stroke-linejoin="round"/>
<path d="M186.2,79.2 L189.4,76.8 L194.6,79.4 L191.4,82.0 Z" fill="#e8e8e8"/>
<path d="M189.6,77.4 L193.2,79.2" stroke="#c02020" stroke-width="0.8"/><path d="M191.6,78.6 L194.6,80.2" stroke="#3040c0" stroke-width="0.8"/>
<path d="M183.6,85.2 L186.6,82.4 L190.4,84.6 L187.6,87.6 Z" fill="#d8d8d8"/>
<rect x="212.2" y="73.8" width="14.8" height="15.6" rx="1.4" fill="#8c8c8c" stroke="#404040" stroke-width="0.9" stroke-dasharray="1.2,0.6"/>
<rect x="214.6" y="75.2" width="10" height="6.4" fill="#e4e4e4"/>
<rect x="214.6" y="75.2" width="10" height="1" fill="#c86060"/>
<rect x="216.2" y="84.2" width="6.8" height="4.6" fill="#c8c8c8"/><rect x="217.2" y="85.2" width="1.8" height="2.8" fill="#404040"/>
<rect x="207.6" y="76.2" width="14.8" height="15.6" rx="1.4" fill="#8c8c8c" stroke="#404040" stroke-width="0.9" stroke-dasharray="1.2,0.6"/>
<rect x="210.0" y="77.60000000000001" width="10" height="6.4" fill="#e4e4e4"/>
<rect x="210.0" y="77.60000000000001" width="10" height="1" fill="#c86060"/>
<rect x="211.6" y="86.60000000000001" width="6.8" height="4.6" fill="#c8c8c8"/><rect x="212.6" y="87.60000000000001" width="1.8" height="2.8" fill="#404040"/>
<rect x="234.9" y="74.6" width="1" height="17.200000000000003" fill="#b4b4b2"/><rect x="235.9" y="74.6" width="0.8" height="17.200000000000003" fill="#ececea"/>
<path d="M246.2,74.6 L255.4,74.6 L259.6,78.8 L259.6,91.4 L246.2,91.4 Z" fill="#f4f4f2" stroke="#b4b4b0" stroke-width="0.9"/>
<path d="M255.4,74.6 L255.4,78.8 L259.6,78.8" fill="#ffffff" stroke="#b4b4b0" stroke-width="0.8"/>
<path d="M257.6,81.4 C263.4,81.4 263.4,87.6 257.6,87.6 L254.4,87.6" fill="none" stroke="#c8a800" stroke-width="3.2"/>
<path d="M257.6,81.4 C262.4,81.4 262.4,87.6 257.6,87.6 L254.4,87.6" fill="none" stroke="#f8e040" stroke-width="1.6"/>
<path d="M255.6,84.0 L249.6,87.6 L255.6,91.0 Z" fill="#e8cc20" stroke="#b89800" stroke-width="0.7"/>
<path d="M276.0,78.0 L286.4,88.6 M286.4,78.0 L276.0,88.6" stroke="#b01810" stroke-width="3.0" stroke-linecap="butt"/>
<path d="M276.2,78.2 L286.2,88.4 M286.2,78.2 L276.2,88.4" stroke="#f04038" stroke-width="1.7" stroke-linecap="butt"/>
<rect x="298.7" y="74.6" width="1" height="17.200000000000003" fill="#b4b4b2"/><rect x="299.7" y="74.6" width="0.8" height="17.200000000000003" fill="#ececea"/>
<path d="M313.8,83.2 L317.6,80.0 L317.6,81.8 L321.2,81.8 L321.2,84.6 L317.6,84.6 L317.6,86.4 Z" fill="#30b030" stroke="#1a7a1a" stroke-width="0.6"/>
<path d="M348.2,83.2 L344.4,80.0 L344.4,81.8 L340.8,81.8 L340.8,84.6 L344.4,84.6 L344.4,86.4 Z" fill="#30b030" stroke="#1a7a1a" stroke-width="0.6"/>
<rect x="362.7" y="74.6" width="1" height="17.200000000000003" fill="#b4b4b2"/><rect x="363.7" y="74.6" width="0.8" height="17.200000000000003" fill="#ececea"/>
<path d="M372.8,82.2 L376.6,76.4 L382.2,83.2 L376.8,86.6 Z" fill="#2a58a0" stroke="#1a3a70" stroke-width="0.6" stroke-linejoin="round"/>
<path d="M376.6,76.4 L376.8,86.6 L372.8,82.2 Z" fill="#8cb8e8"/>
<path d="M379.0,77.0 C380.6,73.4 387.4,73.2 387.6,78.8" fill="none" stroke="#b89c00" stroke-width="3.0"/>
<path d="M379.0,77.0 C380.6,73.4 387.4,73.2 387.6,78.8" fill="none" stroke="#fbe454" stroke-width="1.6"/>
<path d="M384.0,78.4 L391.0,78.4 L387.6,82.6 Z" fill="#f4dc30" stroke="#b89c00" stroke-width="0.6" stroke-linejoin="round"/>
<circle cx="385.8" cy="88.2" r="4.2" fill="#e81010" stroke="#a01010" stroke-width="0.7"/>
<circle cx="385.4" cy="87.6" r="2.0" fill="#ff2a2a"/>
<path d="M399.4,76.6 L406.4,73.8 L418.6,82.4 L417.8,87.0 L410.2,92.6 L400.2,83.2 Z" fill="#1a0c04" stroke="#1a0c04" stroke-width="0.8" stroke-linejoin="round"/>
<path d="M400.2,77.0 L406.4,74.6 L417.6,82.4 L411.0,85.6 Z" fill="#c8561a"/>
<path d="M400.4,77.8 L410.6,86.4 L410.2,91.6 L400.8,82.8 Z" fill="#8e3a0e"/>
<path d="M411.4,86.4 L417.8,83.2 L417.2,86.6 L411.0,91.2 Z" fill="#a84812"/>
<path d="M403.0,77.4 L406.0,76.2 L407.4,77.4 L404.4,78.6 Z M406.6,80.0 L409.6,78.8 L411.0,80.0 L408.0,81.2 Z M410.2,82.6 L413.2,81.4 L414.6,82.6 L411.6,83.8 Z" fill="#1a0a00" stroke="#1a0a00" stroke-width="0.9"/>
<path d="M429.8,80.4 L433.40000000000003,80.4 L431.6,82.2 Z" fill="#383838"/>
<path d="M465.11,82.98 L465.11,85.02 L463.49,84.97 L462.92,86.35 L464.10,87.46 L462.66,88.90 L461.55,87.72 L460.17,88.29 L460.22,89.91 L458.18,89.91 L458.23,88.29 L456.85,87.72 L455.74,88.90 L454.30,87.46 L455.48,86.35 L454.91,84.97 L453.29,85.02 L453.29,82.98 L454.91,83.03 L455.48,81.65 L454.30,80.54 L455.74,79.10 L456.85,80.28 L458.23,79.71 L458.18,78.09 L460.22,78.09 L460.17,79.71 L461.55,80.28 L462.66,79.10 L464.10,80.54 L462.92,81.65 L463.49,83.03 Z" fill="#d4d4d4" stroke="#5a5a5a" stroke-width="0.9" stroke-linejoin="round"/>
<circle cx="459.2" cy="84.0" r="1.8" fill="#9a9a9a" stroke="#6a6a6a" stroke-width="0.5"/>
<rect x="448.8" y="74.6" width="6.2" height="6.2" rx="1.2" fill="#f4f4f4" stroke="#5a5a5a" stroke-width="0.9"/><rect x="450.8" y="76.6" width="2.2" height="2.2" fill="#7a7a7a"/>
<rect x="448.4" y="84.4" width="6.2" height="6.2" rx="1.2" fill="#f4f4f4" stroke="#5a5a5a" stroke-width="0.9"/><rect x="450.4" y="86.4" width="2.2" height="2.2" fill="#7a7a7a"/>
<rect x="473.9" y="74.6" width="1" height="17.200000000000003" fill="#b4b4b2"/><rect x="474.9" y="74.6" width="0.8" height="17.200000000000003" fill="#ececea"/>
<rect x="484.40" y="74.20" width="5.9" height="5.9" fill="#e03838"/>
<rect x="490.20" y="74.20" width="5.9" height="5.9" fill="#6e9ad8"/>
<rect x="496.00" y="74.20" width="5.9" height="5.9" fill="#f4de40"/>
<rect x="484.40" y="80.00" width="5.9" height="5.9" fill="#c8a0d0"/>
<rect x="490.20" y="80.00" width="5.9" height="5.9" fill="#e8b070"/>
<rect x="496.00" y="80.00" width="5.9" height="5.9" fill="#f09838"/>
<rect x="484.40" y="85.80" width="5.9" height="5.9" fill="#f0f0ea"/>
<rect x="490.20" y="85.80" width="5.9" height="5.9" fill="#78e048"/>
<rect x="496.00" y="85.80" width="5.9" height="5.9" fill="#88b4e8"/>
<rect x="484.4" y="74.2" width="17.4" height="17.4" rx="1.6" fill="none" stroke="#6a6a6a" stroke-width="0.8"/>
<path d="M491.6,86.4 L492.2,78.6 C492.6,77.2 493.8,77.2 494.0,78.6 L494.2,82.2 L497.4,82.8 C498.6,83.2 498.2,88.6 496.6,89.0 L492.4,89.0 Z" fill="#f0c890" stroke="#c07830" stroke-width="0.7"/>
<rect x="510.5" y="74.6" width="1" height="17.200000000000003" fill="#b4b4b2"/><rect x="511.5" y="74.6" width="0.8" height="17.200000000000003" fill="#ececea"/>
<rect x="517.2" y="72.8" width="125.8" height="19.8" fill="#ffffff" stroke="#b0b0a0" stroke-width="1"/>
<path d="M629.4,79.0 L638.4,87.0 M638.4,79.0 L629.4,87.0" stroke="#f0706a" stroke-width="3.8" stroke-linecap="round"/>
<path d="M632.0,82.0 L635.8,84.6" stroke="#e03a36" stroke-width="1.6" stroke-linecap="round" opacity="0.7"/>
<path d="M661.4,79.8 L665.8,75.0" stroke="#101010" stroke-width="3.0" stroke-linecap="round"/>
<path d="M659.0,81.6 L661.4,79.4" stroke="#9a9a9a" stroke-width="2.0"/>
<ellipse cx="655.4" cy="86.8" rx="7.0" ry="4.2" fill="#c4c4ee" stroke="#383838" stroke-width="0.9"/>
<ellipse cx="655.4" cy="84.8" rx="7.0" ry="4.2" fill="#d4d4d4" stroke="#383838" stroke-width="0.9"/>
<ellipse cx="655.4" cy="85.0" rx="5.4" ry="2.8" fill="#aaaae4" stroke="#7a7a7a" stroke-width="0.5"/>
<rect x="675.7" y="74.6" width="1" height="17.200000000000003" fill="#b4b4b2"/><rect x="676.7" y="74.6" width="0.8" height="17.200000000000003" fill="#ececea"/>
<rect x="681.4" y="72.8" width="64.2" height="19.8" fill="#ffffff" stroke="#b0b0a0" stroke-width="1"/>
<path d="M731.0,79.0 L740.0,87.0 M740.0,79.0 L731.0,87.0" stroke="#f0706a" stroke-width="3.8" stroke-linecap="round"/>
<path d="M733.6,82.0 L737.4,84.6" stroke="#e03a36" stroke-width="1.6" stroke-linecap="round" opacity="0.7"/>
<circle cx="754.6" cy="78.8" r="1.9" fill="#f4f4f4" stroke="#a8a8a8" stroke-width="0.6"/><circle cx="759.6" cy="76.4" r="1.9" fill="#f4f4f4" stroke="#a8a8a8" stroke-width="0.6"/><circle cx="762.0" cy="81.0" r="2.0" fill="#f4f4f4" stroke="#a8a8a8" stroke-width="0.6"/>
<path d="M757.2,84.4 C758.6,83.2 759.8,83.8 761.8,86.0 C763.8,83.8 765.0,83.2 766.4,84.4 C767.2,85.6 764.0,89.2 761.8,90.8 C759.6,89.2 756.4,85.6 757.2,84.4 Z" fill="#f2f2f2" stroke="#8e8e8e" stroke-width="0.7"/>
<rect x="777.9" y="74.6" width="1" height="17.200000000000003" fill="#b4b4b2"/><rect x="778.9" y="74.6" width="0.8" height="17.200000000000003" fill="#ececea"/>
<rect x="787.8" y="74.4" width="12.8" height="16.4" fill="#f0f0f0" stroke="#a86a00" stroke-width="1.4"/>
<path d="M788.0,75.0 L795.4,77.4 L795.4,91.4 L788.0,89.6 Z" fill="#fff000" stroke="#a07000" stroke-width="1"/>
<path d="M797.6,81.6 L805.6,88.0 L804.0,90.8 L797.8,86.0 Z" fill="#e01010" stroke="#800000" stroke-width="0.8"/>
<path d="M796.4,80.4 L800.0,80.2 L798.4,84.6 Z" fill="#e01010" stroke="#800000" stroke-width="0.6"/>
<path d="M343.4,107.6 L349.6,113.8 M349.6,107.6 L343.4,113.8" stroke="#e84838" stroke-width="2.2" stroke-linecap="round"/>
<path d="M259.4,130.3 L262,127.7 L264.6,130.3" fill="none" stroke="#a0a0a0" stroke-width="1.2"/>
<path d="M259.4,431.3 L262,433.90000000000003 L264.6,431.3" fill="none" stroke="#303030" stroke-width="1.4"/>
<path d="M90.3,446.79999999999995 L87.7,449.4 L90.3,452.0" fill="none" stroke="#a0a0a0" stroke-width="1.2"/>
<path d="M244.29999999999998,446.79999999999995 L246.9,449.4 L244.29999999999998,452.0" fill="none" stroke="#303030" stroke-width="1.4"/>
<path d="M920.3,131.10000000000002 L922.9,128.5 L925.5,131.10000000000002" fill="none" stroke="#a0a0a0" stroke-width="1.2"/>
<path d="M920.3,434.3 L922.9,436.90000000000003 L925.5,434.3" fill="none" stroke="#303030" stroke-width="1.4"/>
<path d="M285.7,446.79999999999995 L283.09999999999997,449.4 L285.7,452.0" fill="none" stroke="#a0a0a0" stroke-width="1.2"/>
<path d="M908.9000000000001,446.79999999999995 L911.5,449.4 L908.9000000000001,452.0" fill="none" stroke="#303030" stroke-width="1.4"/>
<rect x="272" y="275" width="1" height="1" fill="#909090"/>
<rect x="272" y="278" width="1" height="1" fill="#909090"/>
<rect x="272" y="281" width="1" height="1" fill="#909090"/>
<rect x="500.0" y="460" width="1" height="1" fill="#a0a0a0"/>
<rect x="502.2" y="460" width="1" height="1" fill="#a0a0a0"/>
<rect x="504.4" y="460" width="1" height="1" fill="#a0a0a0"/>
<rect x="506.6" y="460" width="1" height="1" fill="#a0a0a0"/>
<rect x="508.8" y="460" width="1" height="1" fill="#a0a0a0"/>
<rect x="927" y="604" width="1.4" height="1.4" fill="#f8f8f8"/><rect x="926.1" y="603.1" width="1" height="1" fill="#a8a8a8"/>
<rect x="924" y="607" width="1.4" height="1.4" fill="#f8f8f8"/><rect x="923.1" y="606.1" width="1" height="1" fill="#a8a8a8"/>
<rect x="927" y="607" width="1.4" height="1.4" fill="#f8f8f8"/><rect x="926.1" y="606.1" width="1" height="1" fill="#a8a8a8"/>
<rect x="921" y="610" width="1.4" height="1.4" fill="#f8f8f8"/><rect x="920.1" y="609.1" width="1" height="1" fill="#a8a8a8"/>
<rect x="924" y="610" width="1.4" height="1.4" fill="#f8f8f8"/><rect x="923.1" y="609.1" width="1" height="1" fill="#a8a8a8"/>
<rect x="927" y="610" width="1.4" height="1.4" fill="#f8f8f8"/><rect x="926.1" y="609.1" width="1" height="1" fill="#a8a8a8"/>
<g clip-path="url(#cTree)">
<path d="M84.8,129.9 L92.2,129.9 L88.5,134.5 Z" fill="#e4e4e4" stroke="#3a3a3a" stroke-width="1.0" stroke-linejoin="round"/>
<circle cx="101.60000000000001" cy="129.5" r="3.2" fill="#1a6ce8" stroke="#0a2a70" stroke-width="0.6"/>
<circle cx="106.4" cy="132.3" r="3.4" fill="#10d0d0" stroke="#0a5050" stroke-width="0.6"/>
<circle cx="101.0" cy="134.9" r="3.2" fill="#1a6ce8" stroke="#0a2a70" stroke-width="0.6"/>
<path d="M97.6,148.3 L105.0,148.3 L101.3,152.9 Z" fill="#e4e4e4" stroke="#3a3a3a" stroke-width="1.0" stroke-linejoin="round"/>
<circle cx="114.30000000000001" cy="147.9" r="3.2" fill="#1a6ce8" stroke="#0a2a70" stroke-width="0.6"/>
<circle cx="119.10000000000001" cy="150.70000000000002" r="3.4" fill="#10d0d0" stroke="#0a5050" stroke-width="0.6"/>
<circle cx="113.7" cy="153.3" r="3.2" fill="#1a6ce8" stroke="#0a2a70" stroke-width="0.6"/>
<circle cx="131.2" cy="170.60000000000002" r="2.6" fill="#8e8a9c" stroke="#2a2a34" stroke-width="0.9"/>
<circle cx="131.2" cy="189.0" r="2.6" fill="#8e8a9c" stroke="#2a2a34" stroke-width="0.9"/>
<rect x="123.8" y="200.7" width="7.0" height="1.9" rx="0.8" fill="#5ac030" stroke="#3a3a3a" stroke-width="0.5"/>
<path d="M130.4,202.7 C129.0,203.89999999999998 128.2,204.7 128.0,205.89999999999998" fill="none" stroke="#3a3a3a" stroke-width="0.8"/>
<ellipse cx="131.6" cy="205.89999999999998" rx="2.9" ry="2.5" transform="rotate(-40 131.6 205.89999999999998)" fill="#f2e44a" stroke="#3a3a20" stroke-width="0.8"/>
<ellipse cx="127.39999999999999" cy="208.89999999999998" rx="2.9" ry="2.5" transform="rotate(-40 127.39999999999999 208.89999999999998)" fill="#f2e44a" stroke="#3a3a20" stroke-width="0.8"/>
<circle cx="131.2" cy="225.8" r="2.6" fill="#8e8a9c" stroke="#2a2a34" stroke-width="0.9"/>
<circle cx="131.2" cy="244.2" r="2.6" fill="#8e8a9c" stroke="#2a2a34" stroke-width="0.9"/>
<circle cx="131.2" cy="262.59999999999997" r="2.6" fill="#8e8a9c" stroke="#2a2a34" stroke-width="0.9"/>
<rect x="123.8" y="274.29999999999995" width="7.0" height="1.9" rx="0.8" fill="#5ac030" stroke="#3a3a3a" stroke-width="0.5"/>
<path d="M130.4,276.29999999999995 C129.0,277.5 128.2,278.29999999999995 128.0,279.5" fill="none" stroke="#3a3a3a" stroke-width="0.8"/>
<ellipse cx="131.6" cy="279.5" rx="2.9" ry="2.5" transform="rotate(-40 131.6 279.5)" fill="#f2e44a" stroke="#3a3a20" stroke-width="0.8"/>
<ellipse cx="127.39999999999999" cy="282.5" rx="2.9" ry="2.5" transform="rotate(-40 127.39999999999999 282.5)" fill="#f2e44a" stroke="#3a3a20" stroke-width="0.8"/>
<rect x="123.8" y="292.7" width="7.0" height="1.9" rx="0.8" fill="#5ac030" stroke="#3a3a3a" stroke-width="0.5"/>
<path d="M130.4,294.7 C129.0,295.90000000000003 128.2,296.7 128.0,297.90000000000003" fill="none" stroke="#3a3a3a" stroke-width="0.8"/>
<ellipse cx="131.6" cy="297.90000000000003" rx="2.9" ry="2.5" transform="rotate(-40 131.6 297.90000000000003)" fill="#f2e44a" stroke="#3a3a20" stroke-width="0.8"/>
<ellipse cx="127.39999999999999" cy="300.90000000000003" rx="2.9" ry="2.5" transform="rotate(-40 127.39999999999999 300.90000000000003)" fill="#f2e44a" stroke="#3a3a20" stroke-width="0.8"/>
<rect x="123.8" y="311.09999999999997" width="7.0" height="1.9" rx="0.8" fill="#5ac030" stroke="#3a3a3a" stroke-width="0.5"/>
<path d="M130.4,313.09999999999997 C129.0,314.3 128.2,315.09999999999997 128.0,316.3" fill="none" stroke="#3a3a3a" stroke-width="0.8"/>
<ellipse cx="131.6" cy="316.3" rx="2.9" ry="2.5" transform="rotate(-40 131.6 316.3)" fill="#f2e44a" stroke="#3a3a20" stroke-width="0.8"/>
<ellipse cx="127.39999999999999" cy="319.3" rx="2.9" ry="2.5" transform="rotate(-40 127.39999999999999 319.3)" fill="#f2e44a" stroke="#3a3a20" stroke-width="0.8"/>
<rect x="123.8" y="329.49999999999994" width="7.0" height="1.9" rx="0.8" fill="#5ac030" stroke="#3a3a3a" stroke-width="0.5"/>
<path d="M130.4,331.49999999999994 C129.0,332.7 128.2,333.49999999999994 128.0,334.7" fill="none" stroke="#3a3a3a" stroke-width="0.8"/>
<ellipse cx="131.6" cy="334.7" rx="2.9" ry="2.5" transform="rotate(-40 131.6 334.7)" fill="#f2e44a" stroke="#3a3a20" stroke-width="0.8"/>
<ellipse cx="127.39999999999999" cy="337.7" rx="2.9" ry="2.5" transform="rotate(-40 127.39999999999999 337.7)" fill="#f2e44a" stroke="#3a3a20" stroke-width="0.8"/>
<rect x="123.8" y="347.8999999999999" width="7.0" height="1.9" rx="0.8" fill="#5ac030" stroke="#3a3a3a" stroke-width="0.5"/>
<path d="M130.4,349.8999999999999 C129.0,351.09999999999997 128.2,351.8999999999999 128.0,353.09999999999997" fill="none" stroke="#3a3a3a" stroke-width="0.8"/>
<ellipse cx="131.6" cy="353.09999999999997" rx="2.9" ry="2.5" transform="rotate(-40 131.6 353.09999999999997)" fill="#f2e44a" stroke="#3a3a20" stroke-width="0.8"/>
<ellipse cx="127.39999999999999" cy="356.09999999999997" rx="2.9" ry="2.5" transform="rotate(-40 127.39999999999999 356.09999999999997)" fill="#f2e44a" stroke="#3a3a20" stroke-width="0.8"/>
<rect x="123.8" y="366.29999999999995" width="7.0" height="1.9" rx="0.8" fill="#5ac030" stroke="#3a3a3a" stroke-width="0.5"/>
<path d="M130.4,368.29999999999995 C129.0,369.5 128.2,370.29999999999995 128.0,371.5" fill="none" stroke="#3a3a3a" stroke-width="0.8"/>
<ellipse cx="131.6" cy="371.5" rx="2.9" ry="2.5" transform="rotate(-40 131.6 371.5)" fill="#f2e44a" stroke="#3a3a20" stroke-width="0.8"/>
<ellipse cx="127.39999999999999" cy="374.5" rx="2.9" ry="2.5" transform="rotate(-40 127.39999999999999 374.5)" fill="#f2e44a" stroke="#3a3a20" stroke-width="0.8"/>
<rect x="123.8" y="384.69999999999993" width="7.0" height="1.9" rx="0.8" fill="#5ac030" stroke="#3a3a3a" stroke-width="0.5"/>
<path d="M130.4,386.69999999999993 C129.0,387.9 128.2,388.69999999999993 128.0,389.9" fill="none" stroke="#3a3a3a" stroke-width="0.8"/>
<ellipse cx="131.6" cy="389.9" rx="2.9" ry="2.5" transform="rotate(-40 131.6 389.9)" fill="#f2e44a" stroke="#3a3a20" stroke-width="0.8"/>
<ellipse cx="127.39999999999999" cy="392.9" rx="2.9" ry="2.5" transform="rotate(-40 127.39999999999999 392.9)" fill="#f2e44a" stroke="#3a3a20" stroke-width="0.8"/>
<rect x="123.8" y="403.09999999999997" width="7.0" height="1.9" rx="0.8" fill="#5ac030" stroke="#3a3a3a" stroke-width="0.5"/>
<path d="M130.4,405.09999999999997 C129.0,406.3 128.2,407.09999999999997 128.0,408.3" fill="none" stroke="#3a3a3a" stroke-width="0.8"/>
<ellipse cx="131.6" cy="408.3" rx="2.9" ry="2.5" transform="rotate(-40 131.6 408.3)" fill="#f2e44a" stroke="#3a3a20" stroke-width="0.8"/>
<ellipse cx="127.39999999999999" cy="411.3" rx="2.9" ry="2.5" transform="rotate(-40 127.39999999999999 411.3)" fill="#f2e44a" stroke="#3a3a20" stroke-width="0.8"/>
<rect x="123.8" y="421.49999999999994" width="7.0" height="1.9" rx="0.8" fill="#5ac030" stroke="#3a3a3a" stroke-width="0.5"/>
<path d="M130.4,423.49999999999994 C129.0,424.7 128.2,425.49999999999994 128.0,426.7" fill="none" stroke="#3a3a3a" stroke-width="0.8"/>
<ellipse cx="131.6" cy="426.7" rx="2.9" ry="2.5" transform="rotate(-40 131.6 426.7)" fill="#f2e44a" stroke="#3a3a20" stroke-width="0.8"/>
<ellipse cx="127.39999999999999" cy="429.7" rx="2.9" ry="2.5" transform="rotate(-40 127.39999999999999 429.7)" fill="#f2e44a" stroke="#3a3a20" stroke-width="0.8"/>
</g>
<path d="M48.5,27.5 L51.5,23.4 L66.3,27.0 L64.0,43.2 L56.0,41.5 Z" fill="#e6c48c" stroke="#4a3a20" stroke-width="0.8" stroke-linejoin="round"/>
<path d="M50.2,25.6 L61.6,28.6 L62.4,40.6 L55.0,38.6 Z" fill="#ffffff" stroke="#b0b0a0" stroke-width="0.4"/>
<path d="M61.4,30.0 L62.9,30.4 L63.2,41.6 L62.0,41.2 Z" fill="#e8f040"/>
<path d="M47.8,28.6 L60.6,32.4 L63.6,43.2 L55.2,40.6 Z" fill="url(#gFolder)" stroke="#4a3a20" stroke-width="0.8" stroke-linejoin="round"/>
<path d="M41.0,41.0 L47.6,35.6 L55.4,41.6 L55.4,47.6 L48.6,51.0 L41.6,47.6 Z" fill="#f4f4f4" stroke="#202020" stroke-width="0.8" stroke-linejoin="round"/>
<path d="M48.6,44.6 L55.4,41.6 L55.4,47.6 L48.6,51.0 Z" fill="#d4d4d4"/>
<rect x="44.0" y="43.2" width="2.2" height="5.0" fill="#303030"/>
<path d="M39.8,40.2 L50.3,32.4 L56.2,40.6 L50.8,45.4 L47.4,38.8 L41.0,41.8 Z" fill="#ee1a1a" stroke="#5a0a0a" stroke-width="0.7" stroke-linejoin="round"/>
<ellipse cx="51.2" cy="37.4" rx="1.0" ry="1.3" fill="#f0d020"/>
<path d="M40.6,113.8 L51.4,104.4 L61.8,109.2 L61.8,123.4 L51.2,132.6 L40.6,127.6 Z" fill="url(#gCube)" stroke="#202020" stroke-width="0.9" stroke-linejoin="round"/>
<path d="M40.6,113.8 L51.2,118.6 L61.8,109.2" fill="none" stroke="#606060" stroke-width="0.6"/><path d="M51.2,118.6 L51.2,132.6" stroke="#808080" stroke-width="0.6"/>
<rect x="47.6" y="117.2" width="1.6" height="1.6" fill="#ffffff"/>
<path d="M42.2,195.4 L47.8,211.8 L54.6,213.8 L62.2,206.8 L64.4,193.8 Z" fill="url(#gTrash)" stroke="#1a2a20" stroke-width="0.9" stroke-linejoin="round"/>
<path d="M41.6,194.8 L51.4,185.8 L64.2,192.4 L53.6,201.6 Z" fill="#161616" stroke="#e8e8e8" stroke-width="1.6" stroke-linejoin="round"/>
<path d="M41.0,194.8 L51.4,185.2 L65.0,192.2 L53.6,202.6" fill="none" stroke="#1a1a1a" stroke-width="0.5" stroke-linejoin="round"/>
<path d="M51.4,187.2 L62.0,192.6 L55.0,198.6 Z" fill="#505050"/>
<path d="M39.6,281.6 L50.4,271.4 L62.4,277.8 L62.4,284.0 L51.6,292.4 L39.6,286.6 Z" fill="#e4e4e4" stroke="#202020" stroke-width="0.9" stroke-linejoin="round"/>
<path d="M39.6,281.6 L51.4,286.8 L62.4,277.8" fill="none" stroke="#b0b0b0" stroke-width="0.6"/>
<circle cx="49.6" cy="286.6" r="0.9" fill="#20d020"/>
<path d="M58.6,349.2 C53,350.6 44.6,358 41.4,366.0" fill="none" stroke="#f4ee00" stroke-width="1.6" stroke-linecap="round"/>
<path d="M41.4,365.6 C39.6,369.6 46.6,369.0 46.2,372.4 C45.8,374.6 43.6,376.4 42.2,377.4" fill="none" stroke="#f4ee00" stroke-width="2.6" stroke-linecap="round"/>
<ellipse cx="51.2" cy="349.8" rx="1.3" ry="1.0" fill="#f4ee00"/>
<path d="M50.4,364.6 L55.8,367.6 L55.8,377.0 L50.6,374.2 Z" fill="#d8d8d8" stroke="#2a2a2a" stroke-width="0.6" stroke-linejoin="round"/>
<path d="M55.8,367.6 L63.8,363.4 L63.8,372.8 L55.8,377.0 Z" fill="#b4b4b4" stroke="#2a2a2a" stroke-width="0.6" stroke-linejoin="round"/>
<path d="M50.4,364.6 L54.0,362.4 L55.8,365.0 L58.6,361.6 L63.8,363.4 L55.8,367.6 Z" fill="#f4f4f4" stroke="#2a2a2a" stroke-width="0.6" stroke-linejoin="round"/>
<path d="M53.6,355.6 L57.4,355.6 L57.4,360.4 L59.8,360.4 L55.5,366.0 L51.2,360.4 L53.6,360.4 Z" fill="#18b030" stroke="#0a5010" stroke-width="0.6" stroke-linejoin="round"/>
<path d="M50.6,431.2 L58.4,434.4 L63.4,437.6 L63.6,452.6 L52.0,447.4 Z" fill="#f0f0f0" stroke="#1a1a1a" stroke-width="0.9" stroke-linejoin="round"/>
<path d="M52.4,436.6 L61.8,440.0 L62.0,450.2 L53.0,446.2 Z" fill="#2a2a2a"/>
<path d="M53.0,437.2 L58.0,439.0 L58.4,444.0 L53.4,442.0 Z" fill="#5a5a5a"/>
<path d="M50.4,430.6 L54.8,430.4 L57.2,433.2 L57.4,436.0 L50.8,433.6 Z" fill="#f4c400" stroke="#8a6a00" stroke-width="0.5"/>
<path d="M42.2,450.4 L47.2,446.8 L58.4,452.6 L53.6,457.4 Z" fill="#e8e8e8" stroke="#1a1a1a" stroke-width="0.9" stroke-linejoin="round"/>
<path d="M44.6,450.2 L47.6,448.2 L56.0,452.6 L53.0,455.0 Z" fill="#f8f8f8" stroke="#a0a0a0" stroke-width="0.4"/>
<path d="M59.6,452.4 C59.4,455.2 61.2,457.2 63.4,456.8" fill="none" stroke="#1a1a1a" stroke-width="1.0"/>
<path d="M945.8,625.6 L953.6,620.4 L958.8,622.6 L958.8,634.6 L951.6,638.4 L945.8,635.6 Z" fill="#3a6c98" stroke="#1a1a1a" stroke-width="0.8"/>
<path d="M945.8,625.6 L951.6,628.4 L958.8,622.6 L953.6,620.4 Z" fill="#5cb0e0"/><rect x="947.0" y="629.6" width="3.4" height="2" fill="#c0c0c0"/>
<circle cx="955.6" cy="627.6" r="1.5" fill="#e02020"/><circle cx="958.2" cy="633.6" r="1.5" fill="#e02020"/>
<path d="M961.0,622.0 L961.4,628.4" stroke="#1a1a1a" stroke-width="0.7"/>
<rect x="965.4" y="622.8" width="16.6" height="12.8" rx="1" fill="#f4f4f0" stroke="#b0b0a8" stroke-width="0.6"/><rect x="967.0" y="624.4" width="13.4" height="9.6" fill="#8c8c8c"/>
<rect x="986.0" y="621.4" width="11" height="14.4" rx="1.6" fill="#e4e8ec" stroke="#808080" stroke-width="0.7"/><circle cx="991.0" cy="628.8" r="3.4" fill="#5080c0"/><path d="M990,627 L992.4,627 L990.6,630.4" stroke="#f0e020" stroke-width="1" fill="none"/>
<path d="M993.4,632.0 L1001.4,632.0 L1001.4,636.4 L998.6,638.6 L996.2,638.6 L993.4,636.4 Z" fill="#f4f4f4" stroke="#909090" stroke-width="0.6"/>
<rect x="1008.0" y="622.8" width="13.4" height="12.6" fill="#f4f4f0" stroke="#b8b8b0" stroke-width="0.6"/><circle cx="1015.4" cy="628.4" r="3.0" fill="#e4e4e4" stroke="#7a7a7a" stroke-width="0.7"/>
<path d="M1007.6,636.0 L1014.6,629.4" stroke="#4a7ac8" stroke-width="1.4"/></svg></body></html>
